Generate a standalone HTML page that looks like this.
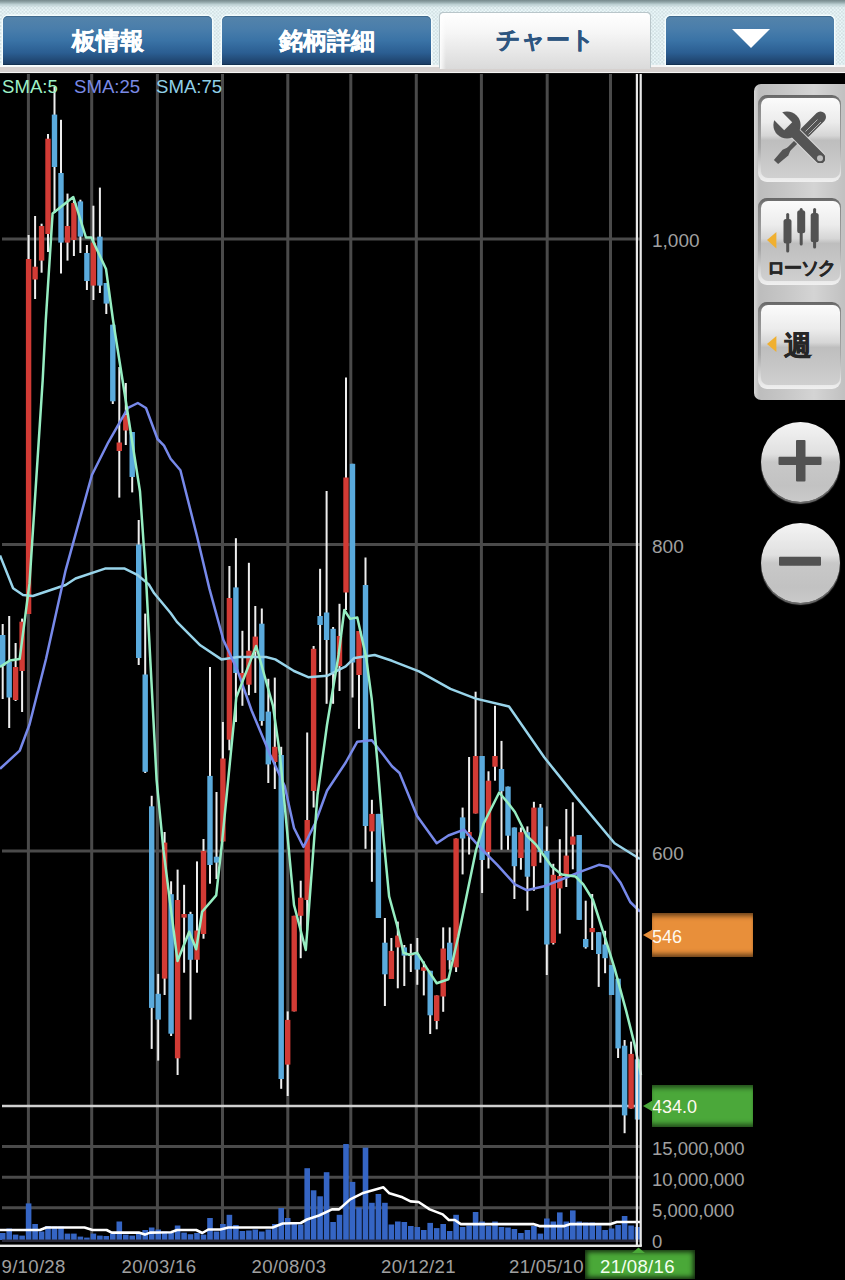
<!DOCTYPE html>
<html><head><meta charset="utf-8">
<style>
*{margin:0;padding:0;box-sizing:border-box}
html,body{width:845px;height:1280px;overflow:hidden;background:#000;font-family:"Liberation Sans",sans-serif}
#hdr{position:absolute;left:0;top:0;width:845px;height:74px;
 background:
  linear-gradient(#76898c 0px,#8fa4a7 2px,#bdd0d3 4.5px,rgba(236,250,253,0) 8px),
  radial-gradient(circle at 25% 25%, #d3e1e4 0.9px, rgba(211,225,228,0) 1.6px) 0 0/3.6px 3.6px,
  radial-gradient(circle at 75% 75%, #d3e1e4 0.9px, rgba(211,225,228,0) 1.6px) 0 0/3.6px 3.6px,
  #eefbfd;}
#hdrline{position:absolute;left:0;top:65px;width:845px;height:9px;background:linear-gradient(#f6f6f6 0,#f6f6f6 2px,#d6d1cf 2px,#d6d1cf 6.5px,#f4f4f4 6.5px,#f4f4f4 8px,#111 8px)}
.tab{position:absolute;top:16px;height:49px;border-radius:5px 5px 0 0;
 background:linear-gradient(#5483aa 0%,#4a7eab 25%,#3a73a6 50%,#2b5e92 75%,#1d4068 97%,#0f2a45 100%);
 box-shadow:inset 0 1px 0 #3f6a8e,0 0 0 1.5px rgba(248,255,255,0.85);color:#fff;font-weight:bold;font-size:24px;text-align:center;line-height:49px;-webkit-text-stroke:0.4px #fff}
.tab.act{top:13px;height:56px;background:linear-gradient(90deg,rgba(255,255,255,0.9) 0,rgba(255,255,255,0) 6px),linear-gradient(#ffffff 0%,#f6f6f6 35%,#dadada 100%);color:#2d5580;-webkit-text-stroke:0.4px #2d5580;line-height:54px;border-radius:4px 4px 0 0;box-shadow:-1px -1px 0 #b9c6ca,1px -1px 0 #b9c6ca}

.yl{position:absolute;left:652px;font-size:18.5px;line-height:20px;color:#a0a0a0;white-space:nowrap}
.pl{position:absolute;left:652px;width:101px;height:42px;line-height:44px;font-size:18px;color:#fffaf0;box-shadow:inset 0 6px 5px -3px rgba(0,0,0,0.55),inset 0 -6px 5px -3px rgba(0,0,0,0.55)}
.xl{position:absolute;top:1257px;font-size:18.6px;letter-spacing:0.3px;line-height:20px;color:#a0a0a0;white-space:nowrap}
#panel{position:absolute;left:754px;top:84px;width:100px;height:316px;border-radius:7px 0 0 7px;background:linear-gradient(90deg,#d6d6d6 0,#bdbdbd 5%,#c6c6c6 30%,#d4d4d4 60%,#bbbbbb 100%)}
.btn{position:absolute;left:758px;width:83px;height:87px;border-radius:9px;background:linear-gradient(#666 0,#8a8a8a 12%,#a8a8a8 60%,#e6e6e6 92%,#f0f0f0 100%)}
.face{position:absolute;left:2.5px;top:3px;right:1.5px;bottom:4.5px;border-radius:7px;background:linear-gradient(#fbfbfb 0%,#ececec 30%,#d6d6d6 47%,#bebebe 53%,#c6c6c6 75%,#d0d0d0 100%)}
.rb{position:absolute;left:761px;width:79px;height:80px;border-radius:50%;background:linear-gradient(#f4f4f4 0%,#e0e0e0 40%,#c8c8c8 50%,#c2c2c2 80%,#cacaca 100%);box-shadow:0 2px 1px #6a6a6a}
</style></head><body>
<div id="hdr"></div>
<div id="hdrline"></div>
<div class="tab" style="left:3px;width:209px">板情報</div>
<div class="tab" style="left:222px;width:209px">銘柄詳細</div>
<div class="tab act" style="left:440px;width:210px">チャート</div>
<div class="tab" style="left:666px;width:168px"><svg width="168" height="49" style="position:absolute;left:0;top:0"><polygon points="66,13 104,13 85,32" fill="#fff"/></svg></div>
<svg style="position:absolute;left:0;top:0" width="845" height="1280">
<line x1="28.4" y1="74" x2="28.4" y2="1242" stroke="#4a4a4a" stroke-width="3"/>
<line x1="91.7" y1="74" x2="91.7" y2="1242" stroke="#4a4a4a" stroke-width="3"/>
<line x1="157.4" y1="74" x2="157.4" y2="1242" stroke="#4a4a4a" stroke-width="3"/>
<line x1="222.5" y1="74" x2="222.5" y2="1242" stroke="#4a4a4a" stroke-width="3"/>
<line x1="287.8" y1="74" x2="287.8" y2="1242" stroke="#4a4a4a" stroke-width="3"/>
<line x1="350.8" y1="74" x2="350.8" y2="1242" stroke="#4a4a4a" stroke-width="3"/>
<line x1="416.3" y1="74" x2="416.3" y2="1242" stroke="#4a4a4a" stroke-width="3"/>
<line x1="481.4" y1="74" x2="481.4" y2="1242" stroke="#4a4a4a" stroke-width="3"/>
<line x1="547.2" y1="74" x2="547.2" y2="1242" stroke="#4a4a4a" stroke-width="3"/>
<line x1="610.5" y1="74" x2="610.5" y2="1242" stroke="#4a4a4a" stroke-width="3"/>
<line x1="2" y1="239" x2="641" y2="239" stroke="#4a4a4a" stroke-width="3"/>
<line x1="2" y1="544.5" x2="641" y2="544.5" stroke="#4a4a4a" stroke-width="3"/>
<line x1="2" y1="851" x2="641" y2="851" stroke="#4a4a4a" stroke-width="3"/>
<line x1="2" y1="1146.4" x2="641" y2="1146.4" stroke="#4a4a4a" stroke-width="3"/>
<line x1="2" y1="1177.2" x2="641" y2="1177.2" stroke="#4a4a4a" stroke-width="3"/>
<line x1="2" y1="1207.8" x2="641" y2="1207.8" stroke="#4a4a4a" stroke-width="3"/>
<rect x="-0.1" y="1233" width="5.6" height="7.0" fill="#3565c4"/>
<rect x="6.4" y="1228.5" width="5.6" height="11.5" fill="#3565c4"/>
<rect x="12.8" y="1234.6" width="5.6" height="5.4" fill="#3565c4"/>
<rect x="19.3" y="1235.6" width="5.6" height="4.4" fill="#3565c4"/>
<rect x="25.8" y="1203.4" width="5.6" height="36.6" fill="#3565c4"/>
<rect x="32.3" y="1224" width="5.6" height="16.0" fill="#3565c4"/>
<rect x="38.8" y="1231.5" width="5.6" height="8.5" fill="#3565c4"/>
<rect x="45.2" y="1226" width="5.6" height="14.0" fill="#3565c4"/>
<rect x="51.7" y="1226.5" width="5.6" height="13.5" fill="#3565c4"/>
<rect x="58.2" y="1226.5" width="5.6" height="13.5" fill="#3565c4"/>
<rect x="64.7" y="1233.6" width="5.6" height="6.4" fill="#3565c4"/>
<rect x="71.1" y="1233.6" width="5.6" height="6.4" fill="#3565c4"/>
<rect x="77.6" y="1236.6" width="5.6" height="3.4" fill="#3565c4"/>
<rect x="84.1" y="1237.6" width="5.6" height="2.4" fill="#3565c4"/>
<rect x="90.6" y="1233.6" width="5.6" height="6.4" fill="#3565c4"/>
<rect x="97.1" y="1235.6" width="5.6" height="4.4" fill="#3565c4"/>
<rect x="103.5" y="1236" width="5.6" height="4.0" fill="#3565c4"/>
<rect x="110.0" y="1233.6" width="5.6" height="6.4" fill="#3565c4"/>
<rect x="116.5" y="1221.5" width="5.6" height="18.5" fill="#3565c4"/>
<rect x="123.0" y="1234.6" width="5.6" height="5.4" fill="#3565c4"/>
<rect x="129.4" y="1235.6" width="5.6" height="4.4" fill="#3565c4"/>
<rect x="135.9" y="1233" width="5.6" height="7.0" fill="#3565c4"/>
<rect x="142.4" y="1230" width="5.6" height="10.0" fill="#3565c4"/>
<rect x="148.9" y="1227.5" width="5.6" height="12.5" fill="#3565c4"/>
<rect x="155.4" y="1229.5" width="5.6" height="10.5" fill="#3565c4"/>
<rect x="161.8" y="1231.5" width="5.6" height="8.5" fill="#3565c4"/>
<rect x="168.3" y="1232.6" width="5.6" height="7.4" fill="#3565c4"/>
<rect x="174.8" y="1225.5" width="5.6" height="14.5" fill="#3565c4"/>
<rect x="181.3" y="1232.6" width="5.6" height="7.4" fill="#3565c4"/>
<rect x="187.7" y="1234.2" width="5.6" height="5.8" fill="#3565c4"/>
<rect x="194.2" y="1233" width="5.6" height="7.0" fill="#3565c4"/>
<rect x="200.7" y="1234.6" width="5.6" height="5.4" fill="#3565c4"/>
<rect x="207.2" y="1218" width="5.6" height="22.0" fill="#3565c4"/>
<rect x="213.7" y="1231.5" width="5.6" height="8.5" fill="#3565c4"/>
<rect x="220.1" y="1224" width="5.6" height="16.0" fill="#3565c4"/>
<rect x="226.6" y="1214.8" width="5.6" height="25.2" fill="#3565c4"/>
<rect x="233.1" y="1225" width="5.6" height="15.0" fill="#3565c4"/>
<rect x="239.6" y="1231" width="5.6" height="9.0" fill="#3565c4"/>
<rect x="246.1" y="1230.5" width="5.6" height="9.5" fill="#3565c4"/>
<rect x="252.5" y="1229.5" width="5.6" height="10.5" fill="#3565c4"/>
<rect x="259.0" y="1231.5" width="5.6" height="8.5" fill="#3565c4"/>
<rect x="265.5" y="1229.5" width="5.6" height="10.5" fill="#3565c4"/>
<rect x="272.0" y="1224" width="5.6" height="16.0" fill="#3565c4"/>
<rect x="278.4" y="1208" width="5.6" height="32.0" fill="#3565c4"/>
<rect x="284.9" y="1218" width="5.6" height="22.0" fill="#3565c4"/>
<rect x="291.4" y="1223.5" width="5.6" height="16.5" fill="#3565c4"/>
<rect x="297.9" y="1224.5" width="5.6" height="15.5" fill="#3565c4"/>
<rect x="304.4" y="1168.2" width="5.6" height="71.8" fill="#3565c4"/>
<rect x="310.8" y="1190.3" width="5.6" height="49.7" fill="#3565c4"/>
<rect x="317.3" y="1196.3" width="5.6" height="43.7" fill="#3565c4"/>
<rect x="323.8" y="1172.2" width="5.6" height="67.8" fill="#3565c4"/>
<rect x="330.3" y="1222" width="5.6" height="18.0" fill="#3565c4"/>
<rect x="336.7" y="1214.8" width="5.6" height="25.2" fill="#3565c4"/>
<rect x="343.2" y="1144" width="5.6" height="96.0" fill="#3565c4"/>
<rect x="349.7" y="1181.9" width="5.6" height="58.1" fill="#3565c4"/>
<rect x="356.2" y="1207.4" width="5.6" height="32.6" fill="#3565c4"/>
<rect x="362.7" y="1147.6" width="5.6" height="92.4" fill="#3565c4"/>
<rect x="369.1" y="1202.8" width="5.6" height="37.2" fill="#3565c4"/>
<rect x="375.6" y="1194" width="5.6" height="46.0" fill="#3565c4"/>
<rect x="382.1" y="1202.8" width="5.6" height="37.2" fill="#3565c4"/>
<rect x="388.6" y="1224.5" width="5.6" height="15.5" fill="#3565c4"/>
<rect x="395.0" y="1221.5" width="5.6" height="18.5" fill="#3565c4"/>
<rect x="401.5" y="1222" width="5.6" height="18.0" fill="#3565c4"/>
<rect x="408.0" y="1226" width="5.6" height="14.0" fill="#3565c4"/>
<rect x="414.5" y="1227" width="5.6" height="13.0" fill="#3565c4"/>
<rect x="421.0" y="1230" width="5.6" height="10.0" fill="#3565c4"/>
<rect x="427.4" y="1222.9" width="5.6" height="17.1" fill="#3565c4"/>
<rect x="433.9" y="1228.1" width="5.6" height="11.9" fill="#3565c4"/>
<rect x="440.4" y="1224" width="5.6" height="16.0" fill="#3565c4"/>
<rect x="446.9" y="1231" width="5.6" height="9.0" fill="#3565c4"/>
<rect x="453.3" y="1214.8" width="5.6" height="25.2" fill="#3565c4"/>
<rect x="459.8" y="1227" width="5.6" height="13.0" fill="#3565c4"/>
<rect x="466.3" y="1225.5" width="5.6" height="14.5" fill="#3565c4"/>
<rect x="472.8" y="1212" width="5.6" height="28.0" fill="#3565c4"/>
<rect x="479.3" y="1221.5" width="5.6" height="18.5" fill="#3565c4"/>
<rect x="485.7" y="1226.1" width="5.6" height="13.9" fill="#3565c4"/>
<rect x="492.2" y="1221.5" width="5.6" height="18.5" fill="#3565c4"/>
<rect x="498.7" y="1227" width="5.6" height="13.0" fill="#3565c4"/>
<rect x="505.2" y="1227.5" width="5.6" height="12.5" fill="#3565c4"/>
<rect x="511.6" y="1229" width="5.6" height="11.0" fill="#3565c4"/>
<rect x="518.1" y="1233" width="5.6" height="7.0" fill="#3565c4"/>
<rect x="524.6" y="1230" width="5.6" height="10.0" fill="#3565c4"/>
<rect x="531.1" y="1226" width="5.6" height="14.0" fill="#3565c4"/>
<rect x="537.6" y="1233.6" width="5.6" height="6.4" fill="#3565c4"/>
<rect x="544.0" y="1218.5" width="5.6" height="21.5" fill="#3565c4"/>
<rect x="550.5" y="1221.5" width="5.6" height="18.5" fill="#3565c4"/>
<rect x="557.0" y="1212.4" width="5.6" height="27.6" fill="#3565c4"/>
<rect x="563.5" y="1221.5" width="5.6" height="18.5" fill="#3565c4"/>
<rect x="570.0" y="1210.4" width="5.6" height="29.6" fill="#3565c4"/>
<rect x="576.4" y="1221.5" width="5.6" height="18.5" fill="#3565c4"/>
<rect x="582.9" y="1222.5" width="5.6" height="17.5" fill="#3565c4"/>
<rect x="589.4" y="1222.5" width="5.6" height="17.5" fill="#3565c4"/>
<rect x="595.9" y="1225.5" width="5.6" height="14.5" fill="#3565c4"/>
<rect x="602.3" y="1230" width="5.6" height="10.0" fill="#3565c4"/>
<rect x="608.8" y="1228.5" width="5.6" height="11.5" fill="#3565c4"/>
<rect x="615.3" y="1225" width="5.6" height="15.0" fill="#3565c4"/>
<rect x="621.8" y="1216" width="5.6" height="24.0" fill="#3565c4"/>
<rect x="628.3" y="1225.5" width="5.6" height="14.5" fill="#3565c4"/>
<rect x="634.7" y="1227" width="5.6" height="13.0" fill="#3565c4"/>
<rect x="2" y="1239.5" width="639" height="2.5" fill="#2a2a3a"/>
<polyline points="0.0,1230.0 40.0,1230.0 46.3,1227.5 84.5,1227.5 92.6,1230.0 106.6,1230.0 111.7,1232.6 138.8,1232.6 144.9,1234.6 150.0,1232.6 171.0,1232.2 177.1,1230.0 196.2,1230.0 202.3,1233.0 208.3,1229.5 220.4,1229.5 228.4,1227.5 272.7,1227.5 282.7,1223.5 300.8,1223.0 306.9,1219.5 319.0,1215.5 332.0,1209.4 339.0,1209.4 350.2,1199.4 362.3,1193.3 383.4,1187.3 389.4,1193.3 402.5,1197.3 410.5,1201.4 418.6,1202.0 429.7,1209.4 442.7,1214.4 448.8,1220.0 454.8,1220.0 460.8,1224.1 533.3,1224.1 539.4,1226.1 564.5,1226.1 570.5,1224.1 610.8,1224.1 616.8,1222.0 640.0,1222.0" fill="none" stroke="#ffffff" stroke-width="2.6" stroke-linejoin="round"/>
<line x1="2" y1="1106" x2="641" y2="1106" stroke="#d0d0d0" stroke-width="2.5"/>
<rect x="1.7" y="624" width="2" height="75.0" fill="#eeeeee"/>
<rect x="-0.0" y="635" width="5.4" height="31.0" fill="#5aaadc"/>
<rect x="8.2" y="616" width="2" height="112.0" fill="#eeeeee"/>
<rect x="6.5" y="661.6" width="5.4" height="35.9" fill="#5aaadc"/>
<rect x="14.6" y="643" width="2" height="58.0" fill="#eeeeee"/>
<rect x="12.9" y="667" width="5.4" height="33.0" fill="#d23b35"/>
<rect x="21.1" y="618.6" width="2" height="93.4" fill="#eeeeee"/>
<rect x="19.4" y="621.7" width="5.4" height="49.3" fill="#d23b35"/>
<rect x="27.6" y="235" width="2" height="379.0" fill="#eeeeee"/>
<rect x="25.9" y="259" width="5.4" height="355.0" fill="#d23b35"/>
<rect x="34.1" y="216" width="2" height="83.0" fill="#eeeeee"/>
<rect x="32.4" y="266.7" width="5.4" height="12.8" fill="#d23b35"/>
<rect x="40.6" y="223.7" width="2" height="49.0" fill="#eeeeee"/>
<rect x="38.9" y="226" width="5.4" height="34.6" fill="#d23b35"/>
<rect x="47.0" y="134" width="2" height="118.0" fill="#eeeeee"/>
<rect x="45.3" y="138.7" width="5.4" height="95.3" fill="#d23b35"/>
<rect x="53.5" y="87" width="2" height="126.0" fill="#eeeeee"/>
<rect x="51.8" y="114.6" width="5.4" height="52.4" fill="#5aaadc"/>
<rect x="60.0" y="119.8" width="2" height="153.7" fill="#eeeeee"/>
<rect x="58.3" y="173" width="5.4" height="69.6" fill="#5aaadc"/>
<rect x="66.5" y="193.6" width="2" height="67.0" fill="#eeeeee"/>
<rect x="64.8" y="226" width="5.4" height="16.6" fill="#d23b35"/>
<rect x="72.9" y="198" width="2" height="58.0" fill="#eeeeee"/>
<rect x="71.2" y="203" width="5.4" height="37.0" fill="#d23b35"/>
<rect x="79.4" y="199.7" width="2" height="53.3" fill="#eeeeee"/>
<rect x="77.7" y="201.4" width="5.4" height="35.2" fill="#5aaadc"/>
<rect x="85.9" y="245" width="2" height="45.0" fill="#eeeeee"/>
<rect x="84.2" y="253" width="5.4" height="28.0" fill="#5aaadc"/>
<rect x="92.4" y="205.7" width="2" height="94.3" fill="#eeeeee"/>
<rect x="90.7" y="242.6" width="5.4" height="43.0" fill="#d23b35"/>
<rect x="98.9" y="187.6" width="2" height="105.4" fill="#eeeeee"/>
<rect x="97.2" y="236.6" width="5.4" height="49.0" fill="#5aaadc"/>
<rect x="105.3" y="283" width="2" height="31.0" fill="#eeeeee"/>
<rect x="103.6" y="283" width="5.4" height="20.6" fill="#5aaadc"/>
<rect x="111.8" y="324.7" width="2" height="79.3" fill="#eeeeee"/>
<rect x="110.1" y="324.7" width="5.4" height="76.6" fill="#5aaadc"/>
<rect x="118.3" y="367" width="2" height="130.6" fill="#eeeeee"/>
<rect x="116.6" y="442.5" width="5.4" height="8.5" fill="#d23b35"/>
<rect x="124.8" y="383" width="2" height="62.0" fill="#eeeeee"/>
<rect x="123.1" y="415" width="5.4" height="15.5" fill="#d23b35"/>
<rect x="131.2" y="432" width="2" height="60.4" fill="#eeeeee"/>
<rect x="129.5" y="432" width="5.4" height="45.0" fill="#5aaadc"/>
<rect x="137.7" y="520" width="2" height="145.0" fill="#eeeeee"/>
<rect x="136.0" y="544.5" width="5.4" height="113.5" fill="#5aaadc"/>
<rect x="144.2" y="613.6" width="2" height="159.4" fill="#eeeeee"/>
<rect x="142.5" y="674.5" width="5.4" height="97.3" fill="#5aaadc"/>
<rect x="150.7" y="795.8" width="2" height="253.1" fill="#eeeeee"/>
<rect x="149.0" y="806.3" width="5.4" height="201.6" fill="#5aaadc"/>
<rect x="157.2" y="973.9" width="2" height="86.7" fill="#eeeeee"/>
<rect x="155.5" y="993.8" width="5.4" height="25.8" fill="#5aaadc"/>
<rect x="163.6" y="832" width="2" height="163.0" fill="#eeeeee"/>
<rect x="161.9" y="842.6" width="5.4" height="136.0" fill="#d23b35"/>
<rect x="170.1" y="881.3" width="2" height="154.7" fill="#eeeeee"/>
<rect x="168.4" y="894.2" width="5.4" height="139.5" fill="#5aaadc"/>
<rect x="176.6" y="869.6" width="2" height="205.4" fill="#eeeeee"/>
<rect x="174.9" y="900" width="5.4" height="158.3" fill="#d23b35"/>
<rect x="183.1" y="884.8" width="2" height="87.9" fill="#eeeeee"/>
<rect x="181.4" y="914" width="5.4" height="3.6" fill="#d23b35"/>
<rect x="189.5" y="911.8" width="2" height="107.8" fill="#eeeeee"/>
<rect x="187.8" y="914" width="5.4" height="45.8" fill="#5aaadc"/>
<rect x="196.0" y="861.4" width="2" height="111.3" fill="#eeeeee"/>
<rect x="194.3" y="930.5" width="5.4" height="29.3" fill="#d23b35"/>
<rect x="202.5" y="839" width="2" height="99.7" fill="#eeeeee"/>
<rect x="200.8" y="850.9" width="5.4" height="83.1" fill="#d23b35"/>
<rect x="209.0" y="667" width="2" height="216.7" fill="#eeeeee"/>
<rect x="207.3" y="775.9" width="5.4" height="89.1" fill="#5aaadc"/>
<rect x="215.5" y="792" width="2" height="87.0" fill="#eeeeee"/>
<rect x="213.8" y="856.7" width="5.4" height="5.9" fill="#5aaadc"/>
<rect x="221.9" y="722" width="2" height="119.5" fill="#eeeeee"/>
<rect x="220.2" y="758.5" width="5.4" height="83.0" fill="#d23b35"/>
<rect x="228.4" y="566" width="2" height="184.3" fill="#eeeeee"/>
<rect x="226.7" y="598" width="5.4" height="141.7" fill="#d23b35"/>
<rect x="234.9" y="538.2" width="2" height="183.8" fill="#eeeeee"/>
<rect x="233.2" y="587.4" width="5.4" height="85.6" fill="#5aaadc"/>
<rect x="241.4" y="630.8" width="2" height="75.0" fill="#eeeeee"/>
<rect x="239.7" y="673" width="5.4" height="5.8" fill="#d23b35"/>
<rect x="247.9" y="562.8" width="2" height="132.4" fill="#eeeeee"/>
<rect x="246.2" y="650.7" width="5.4" height="34.0" fill="#d23b35"/>
<rect x="254.3" y="606" width="2" height="86.9" fill="#eeeeee"/>
<rect x="252.6" y="636.6" width="5.4" height="15.3" fill="#d23b35"/>
<rect x="260.8" y="608.5" width="2" height="117.2" fill="#eeeeee"/>
<rect x="259.1" y="623.7" width="5.4" height="97.3" fill="#5aaadc"/>
<rect x="267.3" y="678.8" width="2" height="104.2" fill="#eeeeee"/>
<rect x="265.6" y="711.6" width="5.4" height="52.8" fill="#5aaadc"/>
<rect x="273.8" y="677.6" width="2" height="111.4" fill="#eeeeee"/>
<rect x="272.1" y="746.8" width="5.4" height="15.2" fill="#d23b35"/>
<rect x="280.2" y="746.8" width="2" height="342.0" fill="#eeeeee"/>
<rect x="278.5" y="755" width="5.4" height="324.0" fill="#5aaadc"/>
<rect x="286.7" y="1011.4" width="2" height="84.6" fill="#eeeeee"/>
<rect x="285.0" y="1019.9" width="5.4" height="44.7" fill="#d23b35"/>
<rect x="293.2" y="915.8" width="2" height="95.6" fill="#eeeeee"/>
<rect x="291.5" y="915.8" width="5.4" height="95.6" fill="#d23b35"/>
<rect x="299.7" y="880.7" width="2" height="77.5" fill="#eeeeee"/>
<rect x="298.0" y="897.7" width="5.4" height="18.1" fill="#d23b35"/>
<rect x="306.2" y="732.5" width="2" height="197.8" fill="#eeeeee"/>
<rect x="304.5" y="820" width="5.4" height="80.0" fill="#d23b35"/>
<rect x="312.6" y="646" width="2" height="161.5" fill="#eeeeee"/>
<rect x="310.9" y="648.8" width="5.4" height="142.2" fill="#d23b35"/>
<rect x="319.1" y="568.8" width="2" height="103.2" fill="#eeeeee"/>
<rect x="317.4" y="616" width="5.4" height="9.0" fill="#5aaadc"/>
<rect x="325.6" y="491" width="2" height="212.8" fill="#eeeeee"/>
<rect x="323.9" y="612.5" width="5.4" height="27.5" fill="#5aaadc"/>
<rect x="332.1" y="627" width="2" height="76.8" fill="#eeeeee"/>
<rect x="330.4" y="628.8" width="5.4" height="43.7" fill="#5aaadc"/>
<rect x="338.5" y="603.8" width="2" height="87.2" fill="#eeeeee"/>
<rect x="336.8" y="636" width="5.4" height="30.0" fill="#d23b35"/>
<rect x="345.0" y="377.5" width="2" height="232.5" fill="#eeeeee"/>
<rect x="343.3" y="477.5" width="5.4" height="115.0" fill="#d23b35"/>
<rect x="351.5" y="463.8" width="2" height="233.7" fill="#eeeeee"/>
<rect x="349.8" y="463.8" width="5.4" height="198.7" fill="#5aaadc"/>
<rect x="358.0" y="631" width="2" height="97.8" fill="#eeeeee"/>
<rect x="356.3" y="631" width="5.4" height="44.0" fill="#d23b35"/>
<rect x="364.5" y="557.5" width="2" height="291.3" fill="#eeeeee"/>
<rect x="362.8" y="585" width="5.4" height="241.0" fill="#5aaadc"/>
<rect x="370.9" y="799.8" width="2" height="82.0" fill="#eeeeee"/>
<rect x="369.2" y="813.9" width="5.4" height="17.5" fill="#d23b35"/>
<rect x="377.4" y="813.9" width="2" height="104.1" fill="#eeeeee"/>
<rect x="375.7" y="813.9" width="5.4" height="104.1" fill="#5aaadc"/>
<rect x="383.9" y="918" width="2" height="88.0" fill="#eeeeee"/>
<rect x="382.2" y="942.7" width="5.4" height="31.6" fill="#5aaadc"/>
<rect x="390.4" y="938" width="2" height="41.0" fill="#eeeeee"/>
<rect x="388.7" y="950.9" width="5.4" height="28.1" fill="#d23b35"/>
<rect x="396.8" y="921.6" width="2" height="66.7" fill="#eeeeee"/>
<rect x="395.1" y="935.6" width="5.4" height="11.8" fill="#d23b35"/>
<rect x="403.3" y="945" width="2" height="41.0" fill="#eeeeee"/>
<rect x="401.6" y="947.4" width="5.4" height="8.2" fill="#5aaadc"/>
<rect x="409.8" y="943.8" width="2" height="28.2" fill="#eeeeee"/>
<rect x="408.1" y="953" width="5.4" height="2.6" fill="#d23b35"/>
<rect x="416.3" y="938" width="2" height="46.8" fill="#eeeeee"/>
<rect x="414.6" y="954.4" width="5.4" height="15.2" fill="#5aaadc"/>
<rect x="422.8" y="961.4" width="2" height="34.0" fill="#eeeeee"/>
<rect x="421.1" y="967.3" width="5.4" height="3.5" fill="#d23b35"/>
<rect x="429.2" y="970.8" width="2" height="63.2" fill="#eeeeee"/>
<rect x="427.5" y="970.8" width="5.4" height="44.5" fill="#5aaadc"/>
<rect x="435.7" y="995.4" width="2" height="33.9" fill="#eeeeee"/>
<rect x="434.0" y="995.4" width="5.4" height="25.6" fill="#d23b35"/>
<rect x="442.2" y="927.4" width="2" height="84.4" fill="#eeeeee"/>
<rect x="440.5" y="948.5" width="5.4" height="48.0" fill="#d23b35"/>
<rect x="448.7" y="927.4" width="2" height="42.2" fill="#eeeeee"/>
<rect x="447.0" y="942.7" width="5.4" height="17.5" fill="#5aaadc"/>
<rect x="455.1" y="838.5" width="2" height="133.5" fill="#eeeeee"/>
<rect x="453.4" y="838.5" width="5.4" height="128.8" fill="#d23b35"/>
<rect x="461.6" y="807.6" width="2" height="66.8" fill="#eeeeee"/>
<rect x="459.9" y="817.4" width="5.4" height="21.1" fill="#5aaadc"/>
<rect x="468.1" y="757" width="2" height="97.5" fill="#eeeeee"/>
<rect x="466.4" y="832" width="5.4" height="4.0" fill="#d23b35"/>
<rect x="474.6" y="691.7" width="2" height="121.8" fill="#eeeeee"/>
<rect x="472.9" y="756" width="5.4" height="57.5" fill="#d23b35"/>
<rect x="481.1" y="756" width="2" height="137.0" fill="#eeeeee"/>
<rect x="479.4" y="756" width="5.4" height="104.0" fill="#5aaadc"/>
<rect x="487.5" y="771.3" width="2" height="97.2" fill="#eeeeee"/>
<rect x="485.8" y="780.7" width="5.4" height="71.3" fill="#d23b35"/>
<rect x="494.0" y="705.8" width="2" height="74.9" fill="#eeeeee"/>
<rect x="492.3" y="756" width="5.4" height="10.7" fill="#d23b35"/>
<rect x="500.5" y="740.9" width="2" height="108.9" fill="#eeeeee"/>
<rect x="498.8" y="769" width="5.4" height="22.2" fill="#5aaadc"/>
<rect x="507.0" y="786.6" width="2" height="63.2" fill="#eeeeee"/>
<rect x="505.3" y="786.6" width="5.4" height="49.1" fill="#5aaadc"/>
<rect x="513.4" y="827.5" width="2" height="71.5" fill="#eeeeee"/>
<rect x="511.7" y="827.5" width="5.4" height="38.7" fill="#5aaadc"/>
<rect x="519.9" y="827.5" width="2" height="42.2" fill="#eeeeee"/>
<rect x="518.2" y="832.2" width="5.4" height="25.8" fill="#d23b35"/>
<rect x="526.4" y="826.4" width="2" height="84.3" fill="#eeeeee"/>
<rect x="524.7" y="832.2" width="5.4" height="44.5" fill="#5aaadc"/>
<rect x="532.9" y="801.8" width="2" height="89.0" fill="#eeeeee"/>
<rect x="531.2" y="807.6" width="5.4" height="58.6" fill="#d23b35"/>
<rect x="539.4" y="804" width="2" height="58.7" fill="#eeeeee"/>
<rect x="537.7" y="807.6" width="5.4" height="44.4" fill="#5aaadc"/>
<rect x="545.8" y="826.4" width="2" height="148.6" fill="#eeeeee"/>
<rect x="544.1" y="851" width="5.4" height="93.5" fill="#5aaadc"/>
<rect x="552.3" y="863.8" width="2" height="80.7" fill="#eeeeee"/>
<rect x="550.6" y="874.8" width="5.4" height="68.2" fill="#d23b35"/>
<rect x="558.8" y="839.2" width="2" height="94.4" fill="#eeeeee"/>
<rect x="557.1" y="876" width="5.4" height="12.4" fill="#d23b35"/>
<rect x="565.3" y="809" width="2" height="78.0" fill="#eeeeee"/>
<rect x="563.6" y="855.6" width="5.4" height="19.2" fill="#d23b35"/>
<rect x="571.8" y="802.3" width="2" height="67.0" fill="#eeeeee"/>
<rect x="570.1" y="836.5" width="5.4" height="8.2" fill="#d23b35"/>
<rect x="578.2" y="835" width="2" height="84.9" fill="#eeeeee"/>
<rect x="576.5" y="835" width="5.4" height="84.9" fill="#5aaadc"/>
<rect x="584.7" y="900.7" width="2" height="47.9" fill="#eeeeee"/>
<rect x="583.0" y="939" width="5.4" height="8.2" fill="#5aaadc"/>
<rect x="591.2" y="894" width="2" height="56.0" fill="#eeeeee"/>
<rect x="589.5" y="928" width="5.4" height="4.2" fill="#d23b35"/>
<rect x="597.7" y="932.2" width="2" height="54.7" fill="#eeeeee"/>
<rect x="596.0" y="932.2" width="5.4" height="21.8" fill="#5aaadc"/>
<rect x="604.1" y="930.8" width="2" height="42.4" fill="#eeeeee"/>
<rect x="602.4" y="944.5" width="5.4" height="13.7" fill="#5aaadc"/>
<rect x="610.6" y="965" width="2" height="30.0" fill="#eeeeee"/>
<rect x="608.9" y="965" width="5.4" height="30.0" fill="#5aaadc"/>
<rect x="617.1" y="978.7" width="2" height="79.3" fill="#eeeeee"/>
<rect x="615.4" y="978.7" width="5.4" height="69.7" fill="#5aaadc"/>
<rect x="623.6" y="1040" width="2" height="93.2" fill="#eeeeee"/>
<rect x="621.9" y="1045.7" width="5.4" height="69.7" fill="#5aaadc"/>
<rect x="630.1" y="1041.6" width="2" height="67.0" fill="#eeeeee"/>
<rect x="628.4" y="1053.9" width="5.4" height="54.7" fill="#d23b35"/>
<rect x="636.5" y="1059.3" width="2" height="60.2" fill="#eeeeee"/>
<rect x="634.8" y="1059.3" width="5.4" height="60.2" fill="#5aaadc"/>
<polyline points="0.0,555.5 13.1,588.3 23.0,595.0 32.8,596.0 65.6,585.0 75.5,578.5 105.0,568.6 124.7,568.6 137.8,575.2 148.8,584.4 154.2,593.3 170.6,613.0 176.9,621.9 200.3,645.3 221.4,659.4 237.8,657.0 266.0,657.0 275.3,659.4 294.0,671.0 308.2,677.2 327.0,675.8 345.7,666.4 354.4,657.9 374.7,655.0 392.0,660.8 419.0,671.3 450.4,688.9 475.8,698.6 509.0,706.5 544.2,757.3 575.5,796.4 614.6,843.3 640.0,859.0" fill="none" stroke="#98d4ea" stroke-width="2.5" stroke-linejoin="round"/>
<polyline points="0.0,768.8 19.7,750.7 29.5,724.5 46.0,659.0 65.6,570.3 91.9,475.0 108.3,442.3 128.0,407.9 137.8,403.0 146.0,408.0 157.5,439.0 164.0,445.6 170.6,458.7 180.4,470.2 196.9,535.8 209.4,588.6 223.4,640.0 237.5,670.6 251.6,710.5 270.3,755.0 284.7,786.0 294.0,828.0 303.5,847.0 315.0,823.5 327.0,790.7 345.7,762.5 357.3,741.7 371.8,740.3 383.3,754.7 392.0,766.3 399.5,773.0 417.1,816.0 436.7,843.3 448.4,835.5 464.0,829.6 481.6,849.1 497.3,864.8 514.9,884.3 526.6,890.2 544.2,886.3 563.7,878.5 583.3,870.7 598.9,864.8 608.7,866.7 620.4,882.4 630.2,902.0 640.0,911.7" fill="none" stroke="#7789ea" stroke-width="2.5" stroke-linejoin="round"/>
<polyline points="0.0,667.0 9.8,660.5 19.7,658.9 29.5,583.4 42.7,380.0 45.8,320.0 52.6,213.4 73.3,197.0 86.0,237.5 91.3,237.5 106.0,269.0 113.0,320.0 122.5,380.0 140.0,491.5 146.0,578.0 156.6,780.0 163.4,849.7 177.5,961.0 189.2,931.7 196.2,949.3 202.1,911.8 216.2,895.4 222.0,842.6 236.3,697.6 256.2,646.0 273.0,706.0 280.0,755.0 294.0,905.0 305.8,950.0 317.5,795.0 327.0,725.0 338.6,655.0 344.3,610.0 350.1,618.9 357.3,617.4 366.0,656.4 371.8,699.7 377.5,763.3 383.3,835.5 389.1,896.4 397.8,928.0 403.5,952.7 409.3,954.7 417.1,952.7 426.9,968.4 436.7,983.2 448.4,979.3 458.2,937.0 475.8,851.0 483.6,823.7 499.2,792.5 509.0,804.2 514.9,812.0 526.6,835.5 536.4,845.2 552.0,866.7 561.8,874.6 575.5,876.5 583.3,884.3 593.0,900.0 604.8,937.0 614.6,968.4 626.3,1011.4 634.1,1042.6 641.0,1075.0" fill="none" stroke="#96eec2" stroke-width="2.5" stroke-linejoin="round"/>
<rect x="635.8" y="74" width="2.2" height="1172" fill="#e8e8e8"/>
<rect x="639.6" y="74" width="2.2" height="1172" fill="#e8e8e8"/>
<rect x="0" y="1244.6" width="641.8" height="2.4" fill="#e8e8e8"/>
</svg>
<div style="position:absolute;left:2px;top:75.5px;font-size:18.6px;line-height:22px;white-space:nowrap">
<span style="position:absolute;left:0;color:#9ef0c6">SMA:5</span>
<span style="position:absolute;left:72px;color:#7a8ae6">SMA:25</span>
<span style="position:absolute;left:154px;color:#90d0e8">SMA:75</span>
</div>
<div class="yl" style="top:231px;font-size:19px">1,000</div>
<div class="yl" style="top:537px;font-size:19px">800</div>
<div class="yl" style="top:844px;font-size:19px">600</div>
<div class="yl" style="top:1138.5px">15,000,000</div>
<div class="yl" style="top:1170px">10,000,000</div>
<div class="yl" style="top:1201px">5,000,000</div>
<div class="yl" style="top:1232px">0</div>
<div class="pl" style="top:913px;height:44px;line-height:48px;background:#e88f3a">546</div>
<svg style="position:absolute;left:642px;top:928px" width="12" height="14"><polygon points="1,7 10.5,1.5 10.5,12.5" fill="#e88f3a"/></svg>
<div class="pl" style="top:1085px;background:#4ba83a">434.0</div>
<svg style="position:absolute;left:642px;top:1099px" width="12" height="14"><polygon points="1,7 10.5,1.5 10.5,12.5" fill="#4ba83a"/></svg>
<div class="xl" style="left:1.5px">9/10/28</div>
<div class="xl" style="left:121.5px">20/03/16</div>
<div class="xl" style="left:251.5px">20/08/03</div>
<div class="xl" style="left:381px">20/12/21</div>
<div class="xl" style="left:509px">21/05/10</div>
<div style="position:absolute;left:585px;top:1250px;width:110px;height:29px;background:#4aa838;box-shadow:inset 0 0 5px 2px rgba(0,0,0,0.75)"></div>
<svg style="position:absolute;left:630px;top:1246px" width="18" height="8"><polygon points="8.5,1.5 15,7 2,7" fill="#4aa838"/></svg>
<div class="xl" style="left:600px;color:#f4fff0">21/08/16</div>
<div id="panel"></div>
<div class="btn" style="top:95px"><div class="face"></div></div>
<div class="btn" style="top:198px"><div class="face"></div></div>
<div class="btn" style="top:302px"><div class="face"></div></div>
<svg style="position:absolute;left:0;top:0" width="845" height="1280">
 <g transform="translate(768,106)">
  <g fill="#545454">
   <line x1="37" y1="26.5" x2="52.5" y2="11" stroke="#545454" stroke-width="11" stroke-linecap="round"/>
   <line x1="37.5" y1="25.5" x2="49.5" y2="13.5" stroke="#b4b4b4" stroke-width="1"/>
   <line x1="40.5" y1="28.5" x2="53" y2="16" stroke="#b4b4b4" stroke-width="1"/>
   <line x1="34" y1="30" x2="20" y2="44" stroke="#545454" stroke-width="4.5"/>
   <polygon points="22.4,44.4 20.3,49.4 10.1,58.1 5.9,53.9 14.6,43.7 19.6,41.6"/>
  </g>
  <mask id="wm"><rect x="-5" y="-5" width="74" height="74" fill="#fff"/><polygon points="24.2,16.2 16.2,24.2 -1,7 7,-1" fill="#000"/></mask>
  <g mask="url(#wm)">
   <line x1="19" y1="19" x2="52.3" y2="52.3" stroke="#d9d9d9" stroke-width="12.6" stroke-linecap="round" opacity="0.9"/>
   <circle cx="19" cy="19" r="13.6" fill="#545454"/>
   <line x1="19" y1="19" x2="52.3" y2="52.3" stroke="#545454" stroke-width="10.6" stroke-linecap="round"/>
  </g>
  <circle cx="52" cy="52.3" r="3" fill="#bdbdbd"/>
 </g>
 <g fill="#525252">
  <rect x="786.2" y="213" width="3" height="39.4" rx="1.5"/><rect x="783.5" y="219" width="8" height="24.4" rx="2.5"/>
  <rect x="799.7" y="208" width="3" height="37.6" rx="1.5"/><rect x="797.2" y="210.2" width="8" height="23.1" rx="2.5"/>
  <rect x="813.1" y="208" width="3" height="40.4" rx="1.5"/><rect x="810.7" y="213" width="8" height="29.2" rx="2.5"/>
 </g>
 <polygon points="767,240 776.4,232 776.4,248.4" fill="#f0b030"/>
 <polygon points="767,344 776.4,336 776.4,352" fill="#f0b030"/>
</svg>
<div style="position:absolute;left:760px;top:255px;width:82px;text-align:center;font-size:18px;line-height:26px;color:#262626;font-weight:bold;letter-spacing:-1px;-webkit-text-stroke:0.5px #262626">ローソク</div>
<div style="position:absolute;left:784px;top:326px;font-size:28px;line-height:40px;font-weight:bold;color:#262626;-webkit-text-stroke:0.5px #262626">週</div>
<div class="rb" style="top:422px"></div>
<div class="rb" style="top:523px"></div>
<svg style="position:absolute;left:0;top:0" width="845" height="1280">
 <rect x="778.5" y="456.7" width="43" height="8.3" fill="#525252" rx="1"/>
 <rect x="796" y="440" width="9.5" height="41.6" fill="#525252" rx="1"/>
 <rect x="779" y="556.7" width="42" height="9.1" fill="#525252" rx="1"/>
</svg>
</body></html>
